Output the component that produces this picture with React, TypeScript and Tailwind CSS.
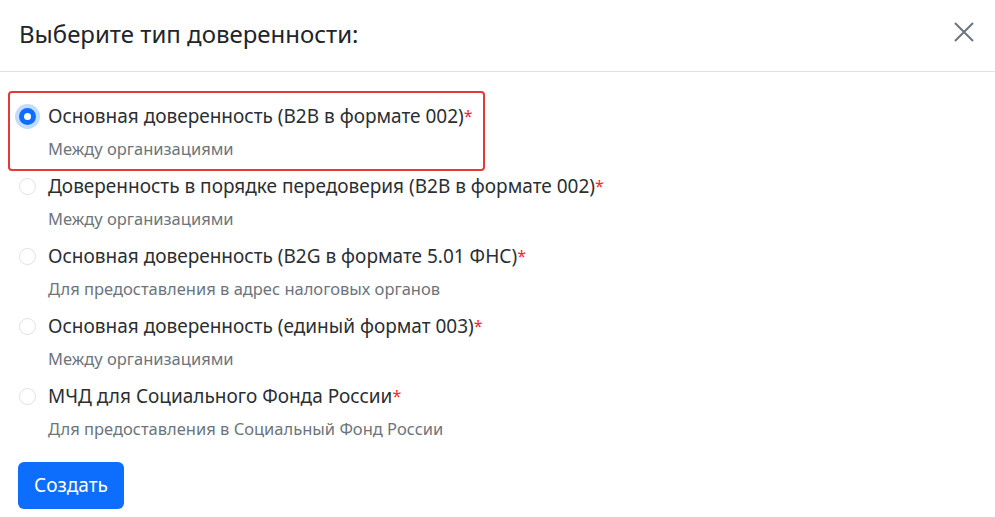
import React, { useState } from "react";

const items = [
  { title: "Основная доверенность (B2B в формате 002)", sub: "Между организациями" },
  { title: "Доверенность в порядке передоверия (B2B в формате 002)", sub: "Между организациями" },
  { title: "Основная доверенность (B2G в формате 5.01 ФНС)", sub: "Для предоставления в адрес налоговых органов" },
  { title: "Основная доверенность (единый формат 003)", sub: "Между организациями" },
  { title: "МЧД для Социального Фонда России", sub: "Для предоставления в Социальный Фонд России" },
];

export default function App() {
  const [sel, setSel] = useState(0);
  return (
    <div className="w-[995px] h-[517px] bg-white text-[#212529] overflow-hidden" style={{ fontFamily: '"Noto Sans", "Open Sans", sans-serif' }}>
      <div className="h-[72px] flex items-center justify-between pl-[19px] pr-[20px] border-b border-[#dee2e6]">
        <h1 className="text-[24px] font-normal leading-none mb-[4px]">Выберите тип доверенности:</h1>
        <button className="w-[22px] h-[22px] flex items-center justify-center text-[#6c757d] mb-[8px]">
          <svg width="22" height="22" viewBox="0 0 22 22" fill="none" stroke="currentColor" strokeWidth="2">
            <path d="M2 2L20 20M20 2L2 20" />
          </svg>
        </button>
      </div>
      <div className="pt-[19px] flex flex-col">
        {items.map((it, i) => (
          <label key={i} className="relative h-[70px] flex items-start pl-[19px] cursor-pointer" onClick={() => setSel(i)}>
            {i === 0 && (
              <span className="absolute left-[8px] top-[0px] w-[477px] h-[80px] border-[2.5px] border-[#e53935] rounded-[4px] pointer-events-none" />
            )}
            <span className="mt-[17px] shrink-0">
              {sel === i ? (
                <span className="block w-[17px] h-[17px] rounded-full bg-[#0d6efd] shadow-[0_0_0_4px_rgba(13,110,253,0.25)] flex items-center justify-center">
                  <span className="block w-[7px] h-[7px] rounded-full bg-white" />
                </span>
              ) : (
                <span className="block w-[17px] h-[17px] rounded-full border border-[#dee2e6] bg-white" />
              )}
            </span>
            <span className="ml-[12px] flex flex-col pt-[12px]">
              <span className="text-[19px] leading-[26px] text-[#2b2f33]">
                {it.title}
                <span className="text-[#ff1f1f] text-[16px] align-top">*</span>
              </span>
              <span className="text-[16.5px] leading-[24px] mt-[8px] text-[#6c757d]">{it.sub}</span>
            </span>
          </label>
        ))}
      </div>
      <div className="pl-[18px] pt-[21px]">
        <button className="h-[47px] px-[16px] rounded-[6px] bg-[#0d6efd] text-white text-[19px] leading-none">Создать</button>
      </div>
    </div>
  );
}
